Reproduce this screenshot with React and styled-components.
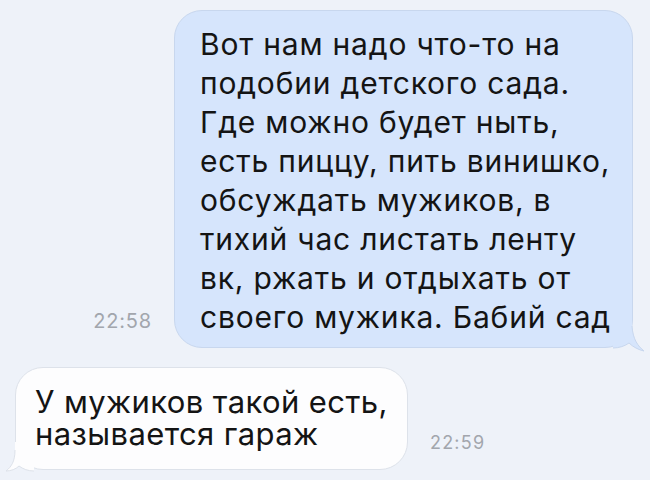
import React from "react";
import styled, { createGlobalStyle } from "styled-components";

const Global = createGlobalStyle`
  html, body { margin: 0; padding: 0; background: #eef2f9; }
  body { font-family: Inter, "Noto Sans", sans-serif; }
`;

const Chat = styled.div`
  width: 650px;
  height: 480px;
  overflow: hidden;
  display: flex;
  flex-direction: column;
  background: #eef2f9;
`;

const Row = styled.div`
  display: flex;
  align-items: flex-end;
  justify-content: ${(p) => (p.$out ? "flex-end" : "flex-start")};
  gap: 22px;
  padding: ${(p) => p.$pad};
`;

const Time = styled.span`
  font-size: ${(p) => p.$size}px;
  letter-spacing: ${(p) => p.$ls}px;
  color: #a2a6ad;
  line-height: 20px;
  margin-bottom: ${(p) => p.$lift}px;
`;

const Bubble = styled.div`
  position: relative;
  box-sizing: border-box;
  width: ${(p) => p.$w}px;
  padding: ${(p) => p.$pad};
  border-radius: 28px;
  background: ${(p) => (p.$out ? "#d6e5fc" : "#fdfdfe")};
  border: 1px solid ${(p) => (p.$out ? "#c8d7ee" : "#dde2ea")};
  color: #141414;
  font-size: ${(p) => p.$size}px;
  letter-spacing: ${(p) => p.$ls}px;
  line-height: ${(p) => p.$lh}px;
`;

const Tail = styled.svg`
  position: absolute;
  bottom: -3px;
  ${(p) => (p.$out ? "right: -15px;" : "left: -10px;")}
  overflow: visible;
`;

const Line = styled.div`
  white-space: nowrap;
`;

function OutTail() {
  return (
    <Tail $out width="34" height="34" viewBox="0 0 34 34">
      <path
        d="M0 32 C6 32 12 30 16 27 C20 31 26 34 31 35 C25 30 20 24 19 10 L19 0 L0 0 Z"
        fill="#d6e5fc"
      />
      <path
        d="M0 32 C6 32 12 30 16 27 C20 31 26 34 31 35 C25 30 20 24 19 10"
        fill="none"
        stroke="#c8d7ee"
        strokeWidth="1"
      />
    </Tail>
  );
}

function InTail() {
  return (
    <Tail width="30" height="30" viewBox="0 0 30 30">
      <path
        d="M28 29 C22 29 17 27 13 24 C10 27 5 29 0 29 C5 25 9 20 9 8 L9 0 L28 0 Z"
        fill="#fdfdfe"
      />
      <path
        d="M28 29 C22 29 17 27 13 24 C10 27 5 29 0 29 C5 25 9 20 9 8"
        fill="none"
        stroke="#dde2ea"
        strokeWidth="1"
      />
    </Tail>
  );
}

const outgoing = [
  "Вот нам надо что-то на",
  "подобии детского сада.",
  "Где можно будет ныть,",
  "есть пиццу, пить винишко,",
  "обсуждать мужиков, в",
  "тихий час листать ленту",
  "вк, ржать и отдыхать от",
  "своего мужика. Бабий сад",
];

const incoming = ["У мужиков такой есть,", "называется гараж"];

export default function App() {
  return (
    <Chat>
      <Global />
      <Row $out $pad="10px 17px 0 0">
        <Time $size={20} $ls={0.8} $lift={17}>22:58</Time>
        <Bubble $out $w={459} $size={30} $ls={0.8} $lh={39} $pad="14px 6px 10px 25px">
          {outgoing.map((t) => (
            <Line key={t}>{t}</Line>
          ))}
          <OutTail />
        </Bubble>
      </Row>
      <Row $pad="19px 0 0 15px">
        <Bubble $w={393} $size={31} $ls={0.4} $lh={32} $pad="18px 6px 19px 19px">
          {incoming.map((t) => (
            <Line key={t}>{t}</Line>
          ))}
          <InTail />
        </Bubble>
        <Time $size={18} $ls={1.2} $lift={17}>22:59</Time>
      </Row>
    </Chat>
  );
}
